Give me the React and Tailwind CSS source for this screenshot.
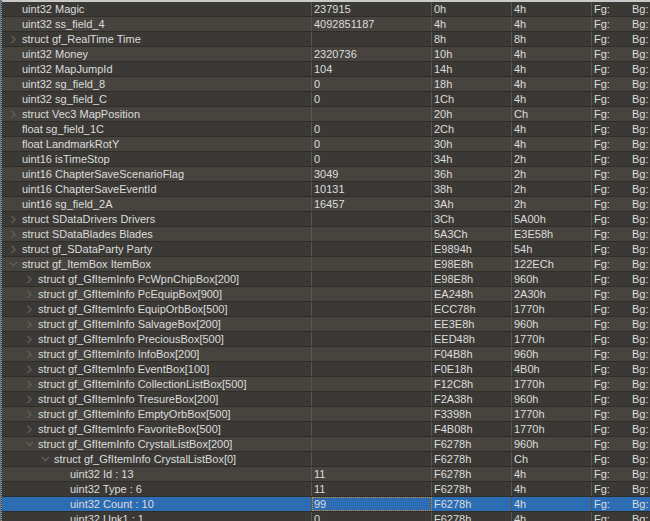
import React from "react";

const rows = [
  { n: "uint32 Magic", v: "237915", s: "0h", z: "4h", l: 0 },
  { n: "uint32 ss_field_4", v: "4092851187", s: "4h", z: "4h", l: 0 },
  { n: "struct gf_RealTime Time", v: "", s: "8h", z: "8h", l: 0, c: "r" },
  { n: "uint32 Money", v: "2320736", s: "10h", z: "4h", l: 0 },
  { n: "uint32 MapJumpId", v: "104", s: "14h", z: "4h", l: 0 },
  { n: "uint32 sg_field_8", v: "0", s: "18h", z: "4h", l: 0 },
  { n: "uint32 sg_field_C", v: "0", s: "1Ch", z: "4h", l: 0 },
  { n: "struct Vec3 MapPosition", v: "", s: "20h", z: "Ch", l: 0, c: "r" },
  { n: "float sg_field_1C", v: "0", s: "2Ch", z: "4h", l: 0 },
  { n: "float LandmarkRotY", v: "0", s: "30h", z: "4h", l: 0 },
  { n: "uint16 isTimeStop", v: "0", s: "34h", z: "2h", l: 0 },
  { n: "uint16 ChapterSaveScenarioFlag", v: "3049", s: "36h", z: "2h", l: 0 },
  { n: "uint16 ChapterSaveEventId", v: "10131", s: "38h", z: "2h", l: 0 },
  { n: "uint16 sg_field_2A", v: "16457", s: "3Ah", z: "2h", l: 0 },
  { n: "struct SDataDrivers Drivers", v: "", s: "3Ch", z: "5A00h", l: 0, c: "r" },
  { n: "struct SDataBlades Blades", v: "", s: "5A3Ch", z: "E3E58h", l: 0, c: "r" },
  { n: "struct gf_SDataParty Party", v: "", s: "E9894h", z: "54h", l: 0, c: "r" },
  { n: "struct gf_ItemBox ItemBox", v: "", s: "E98E8h", z: "122ECh", l: 0, c: "d" },
  { n: "struct gf_GfItemInfo PcWpnChipBox[200]", v: "", s: "E98E8h", z: "960h", l: 1, c: "r" },
  { n: "struct gf_GfItemInfo PcEquipBox[900]", v: "", s: "EA248h", z: "2A30h", l: 1, c: "r" },
  { n: "struct gf_GfItemInfo EquipOrbBox[500]", v: "", s: "ECC78h", z: "1770h", l: 1, c: "r" },
  { n: "struct gf_GfItemInfo SalvageBox[200]", v: "", s: "EE3E8h", z: "960h", l: 1, c: "r" },
  { n: "struct gf_GfItemInfo PreciousBox[500]", v: "", s: "EED48h", z: "1770h", l: 1, c: "r" },
  { n: "struct gf_GfItemInfo InfoBox[200]", v: "", s: "F04B8h", z: "960h", l: 1, c: "r" },
  { n: "struct gf_GfItemInfo EventBox[100]", v: "", s: "F0E18h", z: "4B0h", l: 1, c: "r" },
  { n: "struct gf_GfItemInfo CollectionListBox[500]", v: "", s: "F12C8h", z: "1770h", l: 1, c: "r" },
  { n: "struct gf_GfItemInfo TresureBox[200]", v: "", s: "F2A38h", z: "960h", l: 1, c: "r" },
  { n: "struct gf_GfItemInfo EmptyOrbBox[500]", v: "", s: "F3398h", z: "1770h", l: 1, c: "r" },
  { n: "struct gf_GfItemInfo FavoriteBox[500]", v: "", s: "F4B08h", z: "1770h", l: 1, c: "r" },
  { n: "struct gf_GfItemInfo CrystalListBox[200]", v: "", s: "F6278h", z: "960h", l: 1, c: "d" },
  { n: "struct gf_GfItemInfo CrystalListBox[0]", v: "", s: "F6278h", z: "Ch", l: 2, c: "d" },
  { n: "uint32 Id : 13", v: "11", s: "F6278h", z: "4h", l: 3 },
  { n: "uint32 Type : 6", v: "11", s: "F6278h", z: "4h", l: 3 },
  { n: "uint32 Count : 10", v: "99", s: "F6278h", z: "4h", l: 3, sel: true },
  { n: "uint32 Unk1 : 1", v: "0", s: "F6278h", z: "4h", l: 3 },
];

const indentClass = ["pl-[20px]", "pl-[36px]", "pl-[52px]", "pl-[68px]"];
const chevLeft = ["left-[7px]", "left-[23px]", "left-[39px]", "left-[55px]"];

function Chevron({ kind, level }) {
  if (kind === "r") {
    return (
      <svg className={`absolute top-[3px] ${chevLeft[level]}`} width="8" height="9" viewBox="0 0 8 9">
        <polyline points="2.5,1 6,4.5 2.5,8" fill="none" stroke="#5f5c57" strokeWidth="1.6" />
      </svg>
    );
  }
  return (
    <svg className={`absolute top-[3px] ${chevLeft[level]}`} width="9" height="8" viewBox="0 0 9 8">
      <polyline points="1,2 4.5,5.5 8,2" fill="none" stroke="#5f5c57" strokeWidth="1.6" />
    </svg>
  );
}

export default function App() {
  return (
    <div
      className="w-[650px] h-[521px] overflow-hidden bg-[#3b3935] flex text-[11px] leading-[14px] text-[#dcdcdc]"
      style={{ fontFamily: '"Liberation Sans", Arial, sans-serif' }}
    >
      <div className="w-[2px] h-full flex">
        <div className="w-[1px] h-full bg-[#3d7fc2]" />
        <div className="w-[1px] h-full border-l border-dotted border-[#d98a2b]" />
      </div>
      <div className="flex-1 flex flex-col">
        <div className="h-[2px] bg-[#c9c9c9] shrink-0" />
        {rows.map((r, i) => {
          const bg = r.sel ? "bg-[#2c6cb3]" : i % 2 === 1 ? "bg-[#47443f]" : "bg-[#3b3935]";
          return (
            <div key={i} className={`flex h-[15px] shrink-0 border-b border-[#2f2d2a] ${bg}`}>
              <div className={`relative w-[310px] border-r border-[#5a5752] whitespace-nowrap overflow-hidden ${indentClass[r.l]}`}>
                {r.c && <Chevron kind={r.c} level={r.l} />}
                {r.n}
              </div>
              <div
                className={`w-[120px] border-r border-[#5a5752] pl-[2px] whitespace-nowrap overflow-hidden ${
                  r.sel ? "outline outline-1 outline-dotted outline-[#e08a2a] -outline-offset-1" : ""
                }`}
              >
                {r.v}
              </div>
              <div className="w-[80px] border-r border-[#5a5752] pl-[2px] whitespace-nowrap">{r.s}</div>
              <div className="w-[80px] border-r border-[#5a5752] pl-[2px] whitespace-nowrap">{r.z}</div>
              <div className="flex-1 pl-[2px] flex whitespace-nowrap">
                <span className="w-[38px]">Fg:</span>
                <span>Bg:</span>
              </div>
            </div>
          );
        })}
      </div>
    </div>
  );
}
